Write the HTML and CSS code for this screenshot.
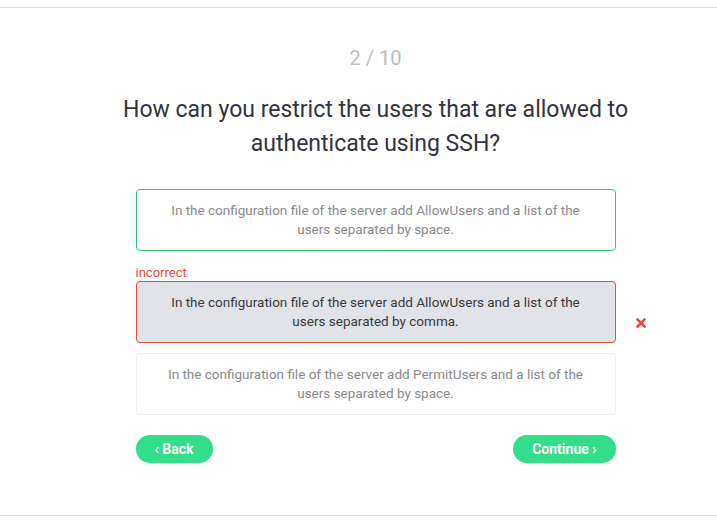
FILE: index.html
```html
<!DOCTYPE html>
<html lang="en">
<head>
  <meta charset="UTF-8">
  <title>Quiz</title>
  <link rel="stylesheet" href="styles.css">
</head>
<body>
  <div id="quiz">
    <div class="counter">2 / 10</div>
    <h1 class="question">How can you restrict the users that are allowed to authenticate using SSH?</h1>

    <div class="answers">
      <div class="answer correct">In the configuration file of the server add AllowUsers and a list of the users separated by space.</div>

      <div class="answer-label">incorrect</div>
      <div class="answer-row">
        <div class="answer wrong">In the configuration file of the server add AllowUsers and a list of the users separated by comma.</div>
        <svg class="mark" width="10" height="10" viewBox="0 0 10 10">
          <path d="M1.5 1.5 L8.5 8.5 M8.5 1.5 L1.5 8.5" stroke="#e74c3c" stroke-width="2.6" stroke-linecap="square"/>
        </svg>
      </div>

      <div class="answer">In the configuration file of the server add PermitUsers and a list of the users separated by space.</div>
    </div>

    <div class="nav">
      <button class="pill" type="button">&lsaquo; Back</button>
      <button class="pill" type="button">Continue &rsaquo;</button>
    </div>
  </div>
</body>
</html>
```

FILE: styles.css
```css
body {
  margin: 0;
  padding-top: 7px;
  font-family: Roboto, sans-serif;
  background-color: #fff;
}
#quiz {
  border-top: 1px solid #dcdcdc;
  border-bottom: 1px solid #dcdcdc;
  height: 509px;
  box-sizing: border-box;
  padding-top: 38px;
  padding-left: 34px;
  display: flex;
  flex-direction: column;
  align-items: center;
}
.counter {
  font-size: 20px;
  color: #bdbdbd;
  line-height: 24px;
}
.question {
  margin: 23px 0 0;
  width: 540px;
  font-size: 23px;
  font-weight: 400;
  line-height: 34px;
  color: #33333f;
  text-align: center;
}
.answers {
  margin-top: 28px;
  width: 480px;
  display: flex;
  flex-direction: column;
}
.answer {
  box-sizing: border-box;
  width: 480px;
  height: 62px;
  padding: 11px 30px;
  border: 1px solid #ececec;
  border-radius: 4px;
  font-size: 13.5px;
  line-height: 19px;
  color: #8a8a8a;
  text-align: center;
  display: flex;
  align-items: center;
  justify-content: center;
}
.answer.correct {
  border-color: #2ecc71;
}
.answer.wrong {
  border-color: #e74c3c;
  background-color: #e2e3e8;
  color: #3a3a3a;
}
.answer-label {
  margin-top: 13px;
  font-size: 13px;
  line-height: 17px;
  color: #e74c3c;
}
.answer-row {
  position: relative;
  margin-bottom: 10px;
}
.mark {
  position: absolute;
  left: 500px;
  top: 37px;
}
.nav {
  margin-top: 20px;
  width: 480px;
  display: flex;
  justify-content: space-between;
}
.pill {
  height: 28px;
  padding: 0 19px;
  border: none;
  border-radius: 14px;
  background-color: #33de8a;
  color: #fff;
  font-family: Roboto, sans-serif;
  font-size: 14px;
  font-weight: 700;
  cursor: pointer;
}
```
